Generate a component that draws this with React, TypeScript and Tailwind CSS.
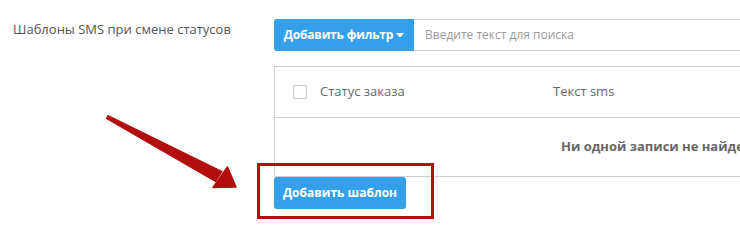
export default function App() {
  return (
    <div className="relative w-[740px] h-[229px] overflow-hidden bg-white font-['Open_Sans',sans-serif]">
      <div className="flex pt-[19px]">
        {/* left label */}
        <div className="w-[274px] shrink-0 pl-[13px] pt-[1px] text-[13px] leading-[18px] text-[#555]">
          Шаблоны SMS при смене статусов
        </div>

        {/* right column */}
        <div className="w-[800px] shrink-0">
          <div className="flex h-[32px]">
            <button className="flex w-[140px] shrink-0 items-center justify-center gap-[3px] rounded-l-[3px] bg-[#35a0ea] text-[12px] font-bold tracking-[-0.2px] text-white">
              Добавить фильтр
              <svg width="8" height="5" viewBox="0 0 8 5">
                <path d="M0 0h8L4 4.5z" fill="white" />
              </svg>
            </button>
            <div className="flex flex-1 items-center border border-l-0 border-[#d0d0d0] pl-[11px] text-[12px] text-[#999]">
              Введите текст для поиска
            </div>
          </div>

          <div className="mt-[15px] w-[780px] border border-b-0 border-[#cfcfcf]">
            <div className="flex h-[51px] items-center border-b border-[#cfcfcf] text-[13px] text-[#666]">
              <span className="ml-[18px] h-[14px] w-[14px] rounded-[2px] border border-[#c8c8c8] bg-white" />
              <span className="ml-[13px] w-[233px]">Статус заказа</span>
              <span>Текст sms</span>
            </div>
            <div className="flex h-[59px] items-center border-b border-[#cfcfcf] pl-[286px] text-[13px] font-bold text-[#666]">
              Ни одной записи не найдено.
            </div>
          </div>

          <button className="h-[32px] w-[132px] rounded-[3px] bg-[#35a0ea] text-[12px] font-bold text-white">
            Добавить шаблон
          </button>
        </div>
      </div>

      {/* annotation: red frame */}
      <div className="absolute left-[257px] top-[163px] h-[56px] w-[177px] border-[3px] border-[#b30d0d]" />

      {/* annotation: red arrow */}
      <svg className="absolute left-0 top-0" width="740" height="229" viewBox="0 0 740 229">
        <path d="M106.5 118.5 L108 115.5 L222 171.5 L215.5 181.5 Z" fill="#b30d0d" strokeLinejoin="round" stroke="#b30d0d" strokeWidth="1.2" />
        <path d="M227.5 167 L236 187 L213 187.5 Z" fill="#b30d0d" stroke="#b30d0d" strokeLinejoin="round" strokeWidth="1.5" />
      </svg>
    </div>
  )
}
